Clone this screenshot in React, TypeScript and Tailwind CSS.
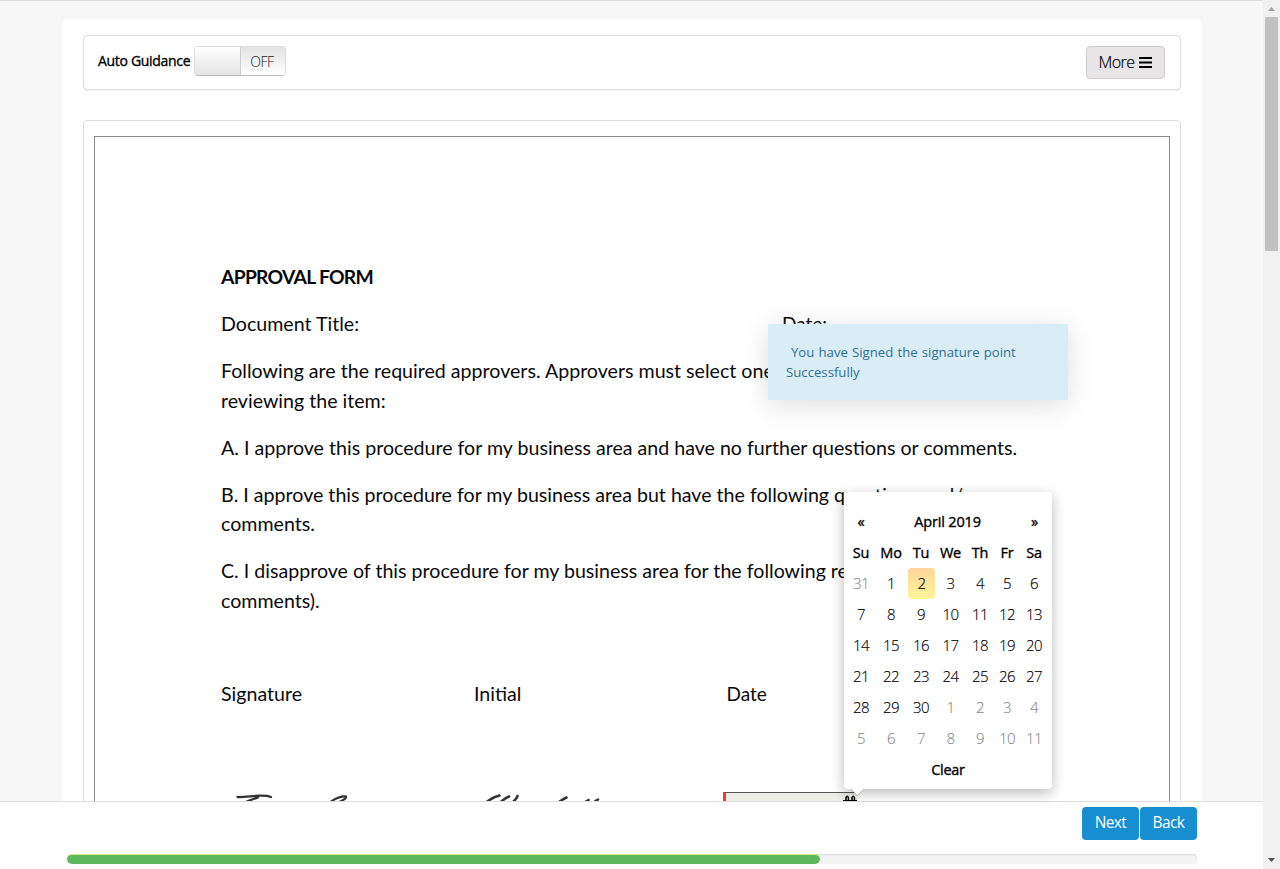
import React from "react";

const dayNames = ["Su", "Mo", "Tu", "We", "Th", "Fr", "Sa"];
const weeks = [
  [31, 1, 2, 3, 4, 5, 6],
  [7, 8, 9, 10, 11, 12, 13],
  [14, 15, 16, 17, 18, 19, 20],
  [21, 22, 23, 24, 25, 26, 27],
  [28, 29, 30, 1, 2, 3, 4],
  [5, 6, 7, 8, 9, 10, 11],
];

function Toolbar() {
  return (
    <div className="flex h-[55px] items-start justify-between rounded border border-[#ddd] bg-white pl-[14px] pr-[15px] pt-[10px] shadow-[0_1px_1px_rgba(0,0,0,0.05)]">
      <div className="flex items-start">
        <span className="w-24 whitespace-nowrap text-[14px] leading-[29px] tracking-[-0.31px] text-black [-webkit-text-stroke:0.35px]">Auto Guidance</span>
        <div className="flex h-[30px] w-[92px] overflow-hidden rounded border border-[#ddd] border-b-[#bbb]">
          <div className="w-[46px] border-r border-[#ccc] bg-linear-to-b from-white to-[#e4e4e4]" />
          <div className="flex-1 bg-linear-to-b from-[#e3e3e3] to-white pr-[2px] text-center text-[14px] leading-[29px] font-light tracking-[-0.5px] text-[#222]">OFF</div>
        </div>
      </div>
      <button className="flex h-[33px] w-[79px] items-center justify-center gap-1 rounded border border-[#ccc] bg-[#e7e5e6] pr-[1px] pb-px text-[16px] font-light tracking-[-0.5px] text-black">
        <span className="[-webkit-text-stroke:0.2px]">More</span>
        <svg className="h-[11px] w-[13px]" viewBox="0 0 13 11" fill="black">
          <path d="M0 0h13v2H0zM0 4.5h13v2H0zM0 9h13v2H0z" />
        </svg>
      </button>
    </div>
  );
}

function DocumentPage() {
  return (
    <div className="h-[900px] rounded border border-[#ddd] bg-white px-[10px] pt-[15px]">
      <div className="h-[880px] border border-[#8c8c8c] pt-[125px] pl-[126px] font-[Lato,Carlito,sans-serif] text-[19.63px] leading-[29.5px] whitespace-nowrap text-[#0a0a0a]">
        <p className="mb-[17.6px] text-[19.3px] font-bold tracking-[-0.72px]">APPROVAL FORM</p>
        <div className="mb-[17.6px] flex">
          <p className="w-[561px]">Document Title:</p>
          <p className="text-[19px]">Date:</p>
        </div>
        <p className="mb-[17.6px]">
          Following are the required approvers. Approvers must select one<br />reviewing the item:
        </p>
        <p className="mb-[17.6px]">A. I approve this procedure for my business area and have no further questions or comments.</p>
        <p className="mb-[17.6px]">
          B. I approve this procedure for my business area but have the following questions and/or<br />comments.
        </p>
        <p>
          C. I disapprove of this procedure for my business area for the following re<br />comments).
        </p>
        <div className="mt-[64px] flex">
          <p className="w-[253px]">Signature</p>
          <p className="w-[252.5px]">Initial</p>
          <p className="text-[19px]">Date</p>
        </div>
        <div className="mt-[83px] flex">
          <svg className="mr-[132px] h-[20px] w-[370px]" viewBox="221 791 370 20" overflow="visible" fill="none" stroke="#333" strokeLinecap="round">
            <path d="M237.500 796C248 796.500 262 792.500 271 796M258 796.500C252 798.500 247 800 242 803" strokeWidth="2.3" />
            <path d="M329 802C335 797.500 342 795 346 795.500C347 798 341 800 335 803" strokeWidth="2.2" />
            <path d="M484 803C489 799 495 795.500 499.500 794.500M498 803C502 800 506 796.500 509 795.500M511 803C514 800 517 797.500 517.500 795M557 802.500C561 799.500 564 797.500 566.500 796.500M583 802.500L588.500 799M592 802.500L598 798.500" strokeWidth="2.6" />
          </svg>
          <div className="flex h-[30px] w-[134px] justify-end border-t border-l-3 border-t-[#555] border-l-[#ff3333] bg-[#ecede7]">
            <svg className="mt-[2px] h-[14px] w-[14px]" viewBox="0 0 14 14" fill="none" stroke="black">
              <path d="M1 12V5M13 12V5M1 6h12" strokeWidth="2" />
              <path d="M3 6V2.500q1.200-2.400 2.400 0v3.500M9 6V2.500q1.200-2.400 2.400 0v3.500" strokeWidth="1.500" />
            </svg>
          </div>
        </div>
      </div>
    </div>
  );
}

function Toast() {
  return (
    <div className="absolute top-[324px] left-[768px] h-[76px] w-[300px] bg-[#d9edf7] pt-[18px] pl-[18px] text-[13.2px] leading-5 whitespace-nowrap text-[#31708f] shadow-[0_5px_30px_rgba(0,0,0,0.13)]">
      <p className="pl-[5px] [word-spacing:0.7px]">You have Signed the signature point</p>
      <p>Successfully</p>
    </div>
  );
}

function Calendar() {
  return (
    <div className="absolute top-[492px] left-[844px] h-[297px] w-[208px] rounded bg-white px-1 pt-[14px] text-center text-[15px] leading-[31px] text-black shadow-[0_4px_14px_rgba(0,0,0,0.28)]">
      <div className="flex text-[14.5px] [-webkit-text-stroke:0.35px]">
        <span className="w-[26px]">«</span>
        <span className="flex-1 tracking-[-0.15px]">April 2019</span>
        <span className="w-[27px]">»</span>
      </div>
      <div className="grid grid-cols-[27px_33px_27px_32px_27px_27px_27px] tracking-[-0.5px]">
        {dayNames.map((d) => (
          <span key={d} className="pr-px text-[14.5px] tracking-[-0.2px] [-webkit-text-stroke:0.35px]">{d}</span>
        ))}
        {weeks.map((week, w) =>
          week.map((day, i) => {
            const outside = (w === 0 && day > 20) || (w > 3 && day < 15);
            const active = w === 0 && day === 2;
            return (
              <span
                key={`${w}-${i}`}
                className={
                  active
                    ? "rounded bg-linear-to-b from-[#fdd49a] to-[#fdf59a] font-light [-webkit-text-stroke:0.15px]"
                    : outside
                      ? "pr-px font-light text-[#888] [-webkit-text-stroke:0.1px]"
                      : "pr-px font-light [-webkit-text-stroke:0.15px]"
                }
              >
                {day}
              </span>
            );
          }),
        )}
      </div>
      <div className="text-[14.5px] tracking-[-0.3px] [-webkit-text-stroke:0.35px]">Clear</div>
      <svg className="absolute top-[297px] left-[7px] h-[7px] w-[13px]" viewBox="0 0 13 7">
        <path d="M0 0L6.5 6.5L13 0" fill="white" stroke="#bbb" />
      </svg>
    </div>
  );
}

function Footer() {
  return (
    <div className="h-[68px] border-t border-[#ddd] bg-white pt-[5px] pr-[66px] pl-[67px]">
      <div className="flex justify-end gap-px text-[15.5px] text-white">
        <button className="h-[33px] w-[57px] rounded bg-[#168ecf] pb-[2px] tracking-[-0.6px]">Next</button>
        <button className="h-[33px] w-[57px] rounded bg-[#168ecf] pb-[2px] tracking-[-0.6px]">Back</button>
      </div>
      <div className="mt-[14px] h-[10px] overflow-hidden rounded bg-[#f4f4f4] shadow-[inset_0_1px_2px_rgba(0,0,0,0.12)]">
        <div className="h-full w-[753px] rounded-[5px] border-t border-[#d9ec7c] bg-[#5cb85c]" />
      </div>
    </div>
  );
}

function Scrollbar() {
  return (
    <div className="flex w-[17px] flex-col items-center bg-[#f1f1f1]">
      <svg className="h-[17px] w-[17px]" viewBox="0 0 17 17">
        <path d="M5 11h7L8.500 7z" fill="#a3a3a3" />
      </svg>
      <div className="h-[234px] w-[13px] bg-[#c1c1c1]" />
      <svg className="mt-auto h-[17px] w-[17px]" viewBox="0 0 17 17">
        <path d="M5 6h7L8.500 10z" fill="#505050" />
      </svg>
    </div>
  );
}

export default function App() {
  return (
    <div className="relative flex h-[869px] w-[1280px] overflow-hidden bg-[#f7f7f7] font-['Open_Sans','Noto_Sans',sans-serif]">
      <div className="flex w-[1263px] flex-col">
        <div className="h-[801px] overflow-hidden border-t border-[#ddd] pt-[18px] pr-[62px] pl-[62px]">
          <div className="h-[1100px] w-[1140px] rounded-md bg-white px-[21px] pt-4">
            <Toolbar />
            <div className="mt-[30px]">
              <DocumentPage />
            </div>
          </div>
        </div>
        <Footer />
      </div>
      <Scrollbar />
      <Toast />
      <Calendar />
    </div>
  );
}
